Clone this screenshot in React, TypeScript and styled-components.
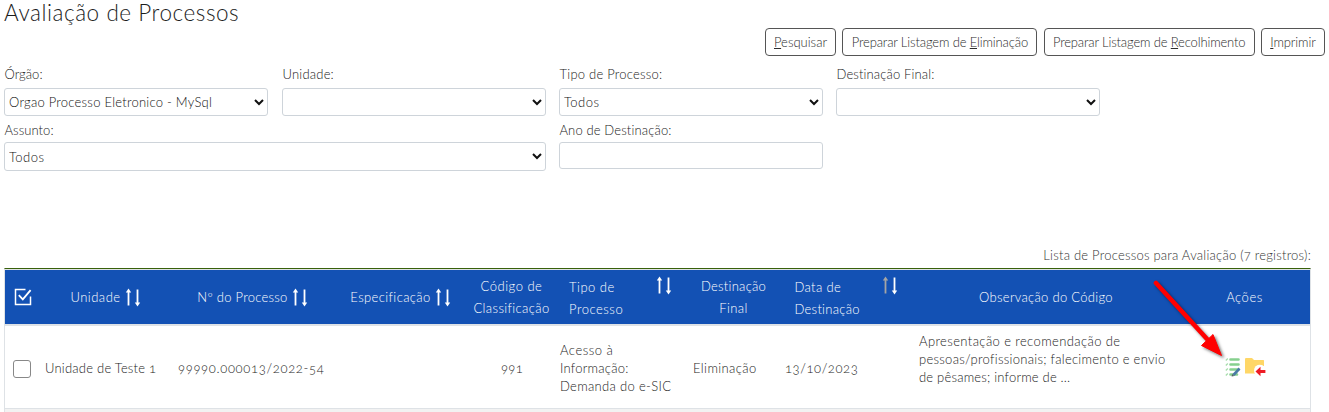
import type { ReactNode } from "react";
import styled, { createGlobalStyle, css } from "styled-components";

const GlobalStyle = createGlobalStyle`
  *, *::before, *::after { box-sizing: border-box; }
  body {
    margin: 0;
    background: #fff;
    overflow: hidden;
    color: #1c1c1c;
    font-family: Lato, "Open Sans", sans-serif;
    font-size: 13px;
    font-weight: 300;
    line-height: 18px;
    font-feature-settings: "onum";
  }
`;

const Page = styled.main`
  position: relative;
  width: 1329px;
  height: 412px;
  padding: 0 4px;
  overflow: hidden;
`;

const Title = styled.h1`
  margin: 0;
  height: 28px;
  line-height: 26px;
  font-size: 22.5px;
  font-weight: 300;
  letter-spacing: 0.55px;
  white-space: nowrap;
`;

const Toolbar = styled.div`
  display: flex;
  justify-content: flex-end;
  gap: 6.33px;
`;

const ToolButton = styled.button<{ $width: number; $track: number }>`
  width: ${(p) => p.$width}px;
  height: 28px;
  padding: 0 0 1px;
  border: 1px solid #555;
  border-radius: 4px;
  background: #fff;
  color: #2c2c2c;
  font: inherit;
  letter-spacing: ${(p) => p.$track}px;
  white-space: nowrap;
`;

const Filters = styled.form`
  display: grid;
  grid-template-columns: 265px 264px 264px 264px;
  column-gap: 13px;
  row-gap: 5px;
  align-items: start;
  height: 190px;
  padding-top: 9px;
  align-content: start;
`;

const Field = styled.div<{ $span?: number; $gap?: number }>`
  grid-column: span ${(p) => p.$span ?? 1};
  width: ${(p) => (p.$span === 2 ? 542 : 264)}px;
  display: flex;
  flex-direction: column;
  gap: ${(p) => p.$gap ?? 5}px;
`;

const Label = styled.label<{ $track: number }>`
  color: #222;
  padding-left: 0.5px;
  letter-spacing: ${(p) => p.$track}px;
`;

const control = css`
  width: 100%;
  padding: 0 1px 0 0;
  border: 1px solid #ced4da;
  border-radius: 3px;
  background: #fff;
  color: #111;
  font: inherit;
  font-feature-settings: inherit;
`;

const Select = styled.select<{ $height?: number; $track?: number }>`
  ${control}
  height: ${(p) => p.$height ?? 28}px;
  letter-spacing: ${(p) => p.$track ?? 0}px;
`;

const Input = styled.input`
  ${control}
  height: 27px;
`;

const Caption = styled.div`
  width: 1307px;
  height: 22px;
  text-align: right;
  color: #333;
  letter-spacing: 0.23px;
`;

const Table = styled.div`
  width: 1307px;
  border: 1px solid #dee2e6;
  border-width: 0 1px;
  border-top: 1px solid #38610b;
`;

const columns = "35px 131px 162px 135px 87px 132px 93px 133px 266px 1fr";

const HeadRow = styled.div`
  display: grid;
  grid-template-columns: ${columns};
  height: 57px;
  border-top: 1px solid #dee2e6;
  border-bottom: 2px solid #dee2e6;
  background: #1351b4;
  color: #fff;
  line-height: 22px;
`;

const BodyRow = styled.div`
  display: grid;
  grid-template-columns: ${columns};
  height: 82px;
  padding-top: 2px;
`;

const NextRow = styled.div`
  height: 10px;
  border-top: 1px solid #dee2e6;
  background: #f2f2f2;
`;

const HeadCell = styled.div<{ $left?: number; $indent?: number }>`
  display: flex;
  align-items: ${(p) => (p.$left ? "flex-start" : "center")};
  justify-content: ${(p) => (p.$left ? "space-between" : "center")};
  gap: 4px;
  padding: ${(p) => (p.$left ? `6px 15px 0 ${p.$left}px` : `0 0 0 ${p.$indent ?? 0}px`)};
  text-align: ${(p) => (p.$left ? "left" : "center")};
`;

const Cell = styled.div<{ $pad?: number; $lift?: number }>`
  display: flex;
  flex-direction: column;
  justify-content: center;
  padding-left: ${(p) => p.$pad ?? 0}px;
  padding-bottom: ${(p) => p.$lift ?? 0}px;
`;

const Line = styled.span<{ $track: number }>`
  display: block;
  white-space: nowrap;
  letter-spacing: ${(p) => p.$track}px;
`;

const CheckBox = styled.span`
  width: 18px;
  height: 18px;
  margin-top: 2px;
  border: 1px solid #888;
  border-radius: 3px;
`;

const Actions = styled.div`
  display: flex;
  align-items: center;
  gap: 3px;
  padding: 0 0 2px 46px;
`;

const Pointer = styled.svg`
  position: absolute;
  left: 1145px;
  top: 272px;
  filter: drop-shadow(2px 2px 1.5px rgba(0, 0, 0, 0.5));
`;

function SortArrows({ sorted }: { sorted?: boolean }) {
  const up = sorted ? "#a5a5a5" : "#fff";
  return (
    <svg width="16" height="19" viewBox="0 0 16 19">
      <path d="M3.5 17.5V3" stroke={up} strokeWidth="1.8" fill="none" />
      <path d="M3.5 0.5L6.2 4.5H0.8Z" fill={up} />
      <path d="M12.5 1.5V16" stroke="#fff" strokeWidth="1.8" fill="none" />
      <path d="M12.5 18.5L15.2 14.5H9.8Z" fill="#fff" />
    </svg>
  );
}

function SelectAllIcon() {
  return (
    <svg width="18" height="18" viewBox="0 0 18 18" fill="none" stroke="#fff">
      <path d="M11.5 1.5H1.5V16.5H16.5V8.5" strokeWidth="1.5" />
      <path d="M4.8 7.2L8.8 11.4L16.6 2.2" strokeWidth="1.8" />
    </svg>
  );
}

function EvaluateIcon() {
  return (
    <svg width="17" height="20" viewBox="0 0 17 20">
      <g stroke="#86d08e" strokeWidth="2.6" strokeLinecap="round">
        <path d="M5.5 2.5H13.5M5.5 7.5H13.5M5.5 12.5H13.5M5.5 17.5H12" />
      </g>
      <g stroke="#a5dcaa" strokeWidth="1.2">
        <path d="M0.8 3.5L2.8 1.5M0.8 8.5L2.8 6.5M0.8 13.5L2.8 11.5M0.8 18.5L2.8 16.5" />
      </g>
      <path d="M14.5 11.5L8.5 18" stroke="#4a7ba6" strokeWidth="2.6" />
      <path d="M7.1 17L6.6 19.6L9.2 19Z" fill="#555f66" />
    </svg>
  );
}

function ReturnFolderIcon() {
  return (
    <svg width="22" height="20" viewBox="0 0 22 20">
      <path d="M0 2Q0 1 1 1H7L9 3H18Q19 3 19 4V16.5H0Z" fill="#ffd767" />
      <circle cx="15" cy="13.5" r="6" fill="#fff" />
      <path d="M19 9V3.5H13V7.6Q17 7 19 9Z" fill="#ffd767" />
      <path d="M10.5 14.5L15.5 9.8V13H20.4V16H15.5V19.2Z" fill="#ee1c25" />
    </svg>
  );
}

const Lines = ({ items }: { items: [string, number][] }) => (
  <div>
    {items.map(([text, track]) => (
      <Line key={text} $track={track}>{text}</Line>
    ))}
  </div>
);

type Option = { label: string; text: string; labelTrack: number; track?: number };

const topFilters: Option[] = [
  { label: "Órgão:", text: "Orgao Processo Eletronico - MySql", labelTrack: 0.05, track: 0.25 },
  { label: "Unidade:", text: "", labelTrack: 0.2 },
  { label: "Tipo de Processo:", text: "Todos", labelTrack: 0.24, track: 0.45 },
  { label: "Destinação Final:", text: "", labelTrack: 0.13 },
];

const buttons: { width: number; track: number; content: ReactNode }[] = [
  { width: 71, track: 0, content: <><u>P</u>esquisar</> },
  { width: 195, track: -0.14, content: <>Preparar Listagem de <u>E</u>liminação</> },
  { width: 211, track: -0.15, content: <>Preparar Listagem de <u>R</u>ecolhimento</> },
  { width: 64, track: -0.1, content: <><u>I</u>mprimir</> },
];

export default function App() {
  return (
    <Page>
      <GlobalStyle />
      <Title>Avaliação de Processos</Title>
      <Toolbar>
        {buttons.map((b) => (
          <ToolButton key={b.width} $width={b.width} $track={b.track}>{b.content}</ToolButton>
        ))}
      </Toolbar>
      <Filters>
        {topFilters.map((f) => (
          <Field key={f.label}>
            <Label $track={f.labelTrack}>{f.label}</Label>
            <Select $track={f.track}><option>{f.text}</option></Select>
          </Field>
        ))}
        <Field $span={2} $gap={3}>
          <Label $track={0.06}>Assunto:</Label>
          <Select $height={29} $track={0.45}><option>Todos</option></Select>
        </Field>
        <Field $gap={3}>
          <Label $track={0.14}>Ano de Destinação:</Label>
          <Input />
        </Field>
      </Filters>
      <Caption>Lista de Processos para Avaliação (7 registros):</Caption>
      <Table>
        <HeadRow>
          <HeadCell><SelectAllIcon /></HeadCell>
          <HeadCell><Line $track={0.5}>Unidade</Line><SortArrows /></HeadCell>
          <HeadCell $indent={1}><Line $track={0.27}>Nº do Processo</Line><SortArrows /></HeadCell>
          <HeadCell><Line $track={0.38}>Especificação</Line><SortArrows /></HeadCell>
          <HeadCell><Lines items={[["Código de", 0.5], ["Classificação", 0.37]]} /></HeadCell>
          <HeadCell $left={14}><Lines items={[["Tipo de", 0.5], ["Processo", 0.53]]} /><SortArrows /></HeadCell>
          <HeadCell><Lines items={[["Destinação", 0.27], ["Final", 0.4]]} /></HeadCell>
          <HeadCell $left={14.5}><Lines items={[["Data de", 0.35], ["Destinação", 0.27]]} /><SortArrows sorted /></HeadCell>
          <HeadCell><Line $track={0.3}>Observação do Código</Line></HeadCell>
          <HeadCell><Line $track={0.55}>Ações</Line></HeadCell>
        </HeadRow>
        <BodyRow>
          <Cell $pad={8}><CheckBox /></Cell>
          <Cell $pad={5}><Line $track={0.22}>Unidade de Teste 1</Line></Cell>
          <Cell $pad={7}><Line $track={0.68}>99990.000013/2022-54</Line></Cell>
          <Cell />
          <Cell $pad={33}><Line $track={0.3}>991</Line></Cell>
          <Cell $pad={5}>
            <Lines items={[["Acesso à", 0.52], ["Informação:", 0.25], ["Demanda do e-SIC", 0.32]]} />
          </Cell>
          <Cell $pad={6}><Line $track={0.4}>Eliminação</Line></Cell>
          <Cell $pad={5}><Line $track={0.58}>13/10/2023</Line></Cell>
          <Cell $pad={6} $lift={18}>
            <Lines
              items={[
                ["Apresentação e recomendação de", 0.4],
                ["pessoas/profissionais; falecimento e envio", 0.28],
                ["de pêsames; informe de ...", 0.2],
              ]}
            />
          </Cell>
          <Actions><EvaluateIcon /><ReturnFolderIcon /></Actions>
        </BodyRow>
        <NextRow />
      </Table>
      <Pointer width="90" height="95" viewBox="0 0 90 95">
        <path d="M11 11L62 67" stroke="#ff0000" strokeWidth="4.6" strokeLinecap="round" />
        <path d="M76.5 83.5L56.5 73.5L68 62.5Z" fill="#ff0000" stroke="#ff0000" strokeWidth="1" strokeLinejoin="round" />
      </Pointer>
    </Page>
  );
}
